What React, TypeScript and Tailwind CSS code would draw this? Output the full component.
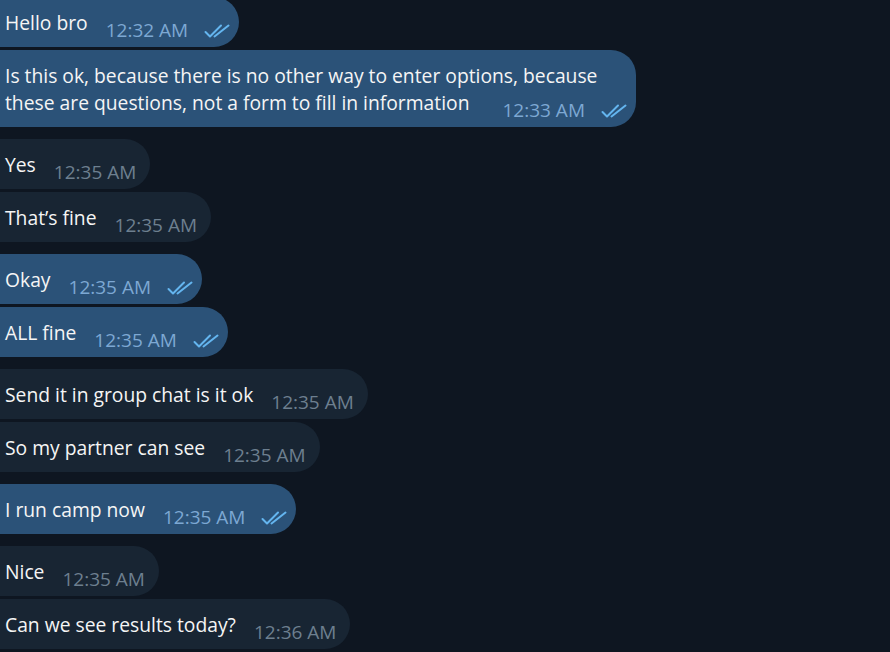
import React from "react";

type Msg = { text: React.ReactNode; time: string; out: boolean; first?: boolean; gap?: string };

const messages: Msg[] = [
  { text: "Hello bro", time: "12:32 AM", out: true },
  {
    text: (
      <>
        Is this ok, because there is no other way to enter options, because
        <br />
        these are questions, not a form to fill in information
      </>
    ),
    time: "12:33 AM",
    out: true,
    gap: "ml-[33px]",
  },
  { text: "Yes", time: "12:35 AM", out: false, first: true },
  { text: "That’s fine", time: "12:35 AM", out: false },
  { text: "Okay", time: "12:35 AM", out: true, first: true },
  { text: "ALL fine", time: "12:35 AM", out: true },
  { text: "Send it in group chat is it ok", time: "12:35 AM", out: false, first: true },
  { text: "So my partner can see", time: "12:35 AM", out: false },
  { text: "I run camp now", time: "12:35 AM", out: true, first: true },
  { text: "Nice", time: "12:35 AM", out: false, first: true },
  { text: "Can we see results today?", time: "12:36 AM", out: false },
];

const DoubleCheck = () => (
  <svg width="26" height="14" viewBox="0 0 26 14" fill="none" className="shrink-0">
    <path d="M1.5 8 L6 12.5 L17 1.5" stroke="#64b5ef" strokeWidth="2" strokeLinecap="round" strokeLinejoin="round" />
    <path d="M10.5 12.5 L24.5 1.5" stroke="#64b5ef" strokeWidth="2" strokeLinecap="round" />
  </svg>
);

const Bubble = ({ msg }: { msg: Msg }) => (
  <div
    className={`w-fit rounded-r-[25px] pl-[5px] pt-[13px] pb-[4px] leading-[26px] whitespace-nowrap ${
      msg.out ? "bg-[#2b5278] pr-[9px]" : "bg-[#182533] pr-[14px]"
    } ${msg.first ? "mt-[12px]" : "mt-[3px]"}`}
  >
    <span className="text-[19.3px] text-[#f5f5f5]">{msg.text}</span>
    <span className={`inline-flex items-center align-[-7px] text-[19px] ${msg.gap ?? "ml-[18px]"}`}>
      <span className={msg.out ? "text-[#7da8d3]" : "text-[#6d7f8f]"}>{msg.time}</span>
      {msg.out && (
        <span className="ml-[16px] mt-[2px]">
          <DoubleCheck />
        </span>
      )}
    </span>
  </div>
);

const App = () => {
  return (
    <section
      className="w-[890px] h-[652px] overflow-hidden bg-[#0e1621]"
      style={{ fontFamily: '"Open Sans", sans-serif' }}
    >
      <div className="flex flex-col -mt-[6px]">
        {messages.map((m, i) => (
          <Bubble key={i} msg={m} />
        ))}
      </div>
    </section>
  );
};

export default App;
